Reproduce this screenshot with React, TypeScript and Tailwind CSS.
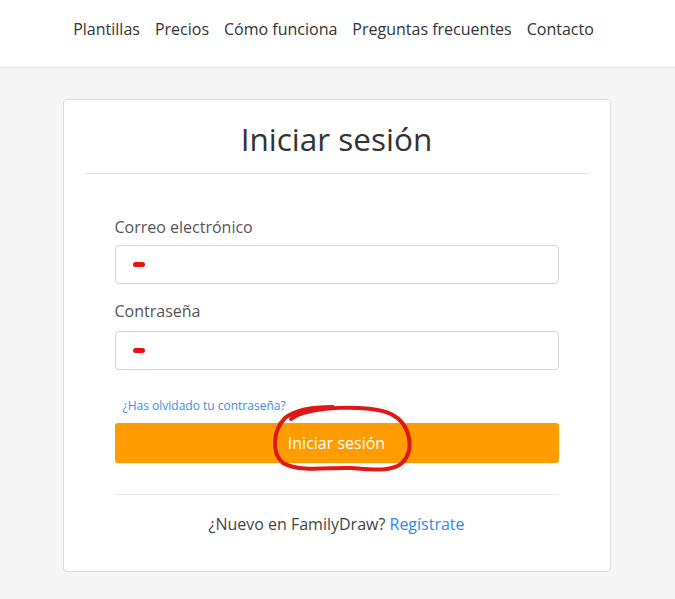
const navItems = ["Plantillas", "Precios", "Cómo funciona", "Preguntas frecuentes", "Contacto"];

function Field({ label, className = "", gap = "mt-[7px]" }: { label: string; className?: string; gap?: string }) {
  return (
    <div className={className}>
      <label className="block text-[16px] leading-[22px] text-[#555]">{label}</label>
      <div className={`${gap} flex h-[39px] items-center rounded-[4px] border border-[#d4d4d4] bg-white pl-[17px]`}>
        {/* red scribble from the screenshot */}
        <span className="h-[5px] w-[12px] rounded-full bg-[#e81212]" />
      </div>
    </div>
  );
}

export default function App() {
  return (
    <div className="min-h-[599px] bg-[#f5f5f5] font-['Open_Sans',sans-serif]">
      <header className="flex h-[68px] items-center justify-center border-b border-[#e3e3e3] bg-white pb-[10px]">
        <nav className="flex gap-[15px] pr-[8px] text-[16px] text-[#333]">
          {navItems.map((item) => (
            <a key={item} href="#">
              {item}
            </a>
          ))}
        </nav>
      </header>

      <main className="pt-[31px] pr-[2px] pb-[28px]">
        <div className="mx-auto w-[548px] rounded-[4px] border border-[#dddddd] bg-white pt-[17px] pb-[36px]">
          <h1 className="text-center text-[31.5px] leading-[44px] text-[#333]">Iniciar sesión</h1>
          <div className="mx-[21px] mt-[12px] border-t border-[#e5e5e5]" />

          <div className="px-[51px] pt-[42px]">
            <Field label="Correo electrónico" />
            <Field label="Contraseña" className="mt-[16px]" gap="mt-[9px]" />

            <a href="#" className="mt-[27px] block pl-[8px] text-[12px] leading-[17px] text-[#3a8ee6]">
              ¿Has olvidado tu contraseña?
            </a>

            <div className="relative mt-[9px]">
              <button className="h-[40px] w-full rounded-[3px] bg-[#ff9c00] text-[16px] text-white">
                Iniciar sesión
              </button>
              <svg
                className="pointer-events-none absolute left-[156px] top-[-20px]"
                width="146"
                height="72"
                viewBox="0 0 146 72"
                fill="none"
              >
                <path
                  d="M20 16 C35 3, 100 1, 120 11 C140 21, 144 47, 131 60 C120 70, 95 66, 80 65 C60 64, 30 70, 12 60 C0 50, 2 27, 14 15 C25 6, 45 4, 62 4"
                  stroke="#e01717"
                  strokeWidth="4"
                  strokeLinecap="round"
                />
              </svg>
            </div>

            <div className="mt-[31px] border-t border-[#e8e8e8]" />
            <p className="mt-[18px] text-center text-[16px] leading-[22px] text-[#444]">
              ¿Nuevo en FamilyDraw? <a href="#" className="text-[#2f86f0]">Regístrate</a>
            </p>
          </div>
        </div>
      </main>
    </div>
  );
}
